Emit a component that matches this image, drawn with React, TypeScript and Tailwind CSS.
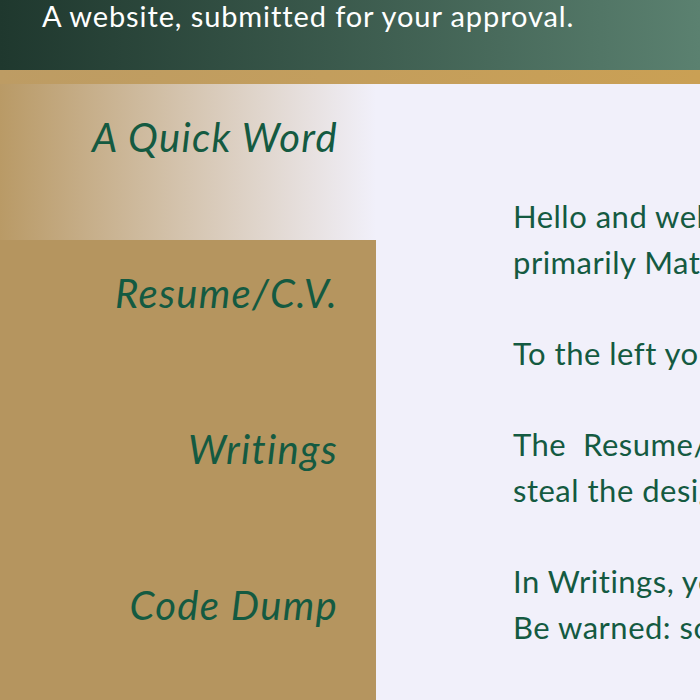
import React from "react";

const font = { fontFamily: "Lato, 'Noto Sans', sans-serif" };

const navItems = ["A Quick Word", "Resume/C.V.", "Writings", "Code Dump"];

export default function App() {
  return (
    <div className="w-[700px] h-[700px] overflow-hidden bg-[#f1f0fa] flex flex-col [font-variant-ligatures:none]" style={font}>
      <header className="h-[70px] shrink-0 bg-gradient-to-r from-[#1f382e] to-[#5b8170] pl-[42px]">
        <h2 className="text-white text-[29px] leading-[34px] -mt-[1px] tracking-[0.9px] whitespace-nowrap">
          A website, submitted for your approval.
        </h2>
      </header>
      <div className="h-[14px] shrink-0 bg-gradient-to-r from-[#bd9c64] to-[#caa054]" />
      <div className="flex flex-1 min-h-0">
        <nav className="w-[376px] shrink-0 bg-[#b5955f] flex flex-col">
          {navItems.map((item, i) => (
            <div
              key={item}
              className={
                i === 0
                  ? "h-[156px] shrink-0 pr-[38px] pt-[33px] text-right bg-gradient-to-r from-[#b99a66] to-[#f1f0fa]"
                  : "h-[156px] shrink-0 pr-[38px] pt-[33px] text-right"
              }
            >
              <span className="italic text-[40px] leading-[40px] tracking-[1.3px] text-[#145a41] whitespace-nowrap">{item}</span>
            </div>
          ))}
        </nav>
        <main className="flex-1 min-w-0 overflow-hidden pl-[137px] pt-[109px] text-[#145a41] text-[31px] leading-[46px] tracking-[0.5px] whitespace-nowrap">
          <p>
            Hello and welcome to my website. This is a place belonging
            <br />
            primarily Matthew, who made it all by himself.
          </p>
          <p className="mt-[45px]">To the left you will find links to the other sections of the site.</p>
          <p className="mt-[45px]">
            The&nbsp; Resume/C.V. section contains my work history; please don't
            <br />
            steal the design, it was very hard to make.
          </p>
          <p className="mt-[45px]">
            In Writings, you will find assorted essays and short stories.
            <br />
            Be warned: some of them are quite long.
          </p>
        </main>
      </div>
    </div>
  );
}
